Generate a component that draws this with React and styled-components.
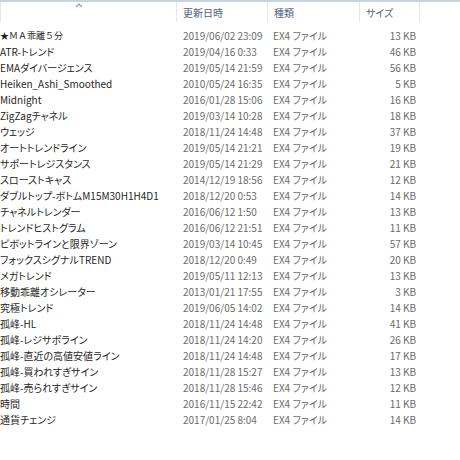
import React from "react";
import styled, { createGlobalStyle } from "styled-components";

const Global = createGlobalStyle`
  html, body { margin: 0; padding: 0; background: #fff; }
  body { width: 460px; height: 460px; overflow: hidden; }
`;

const files = [
  ["★ＭＡ乖離５分", "2019/06/02 23:09", "13 KB", true],
  ["ATR-トレンド", "2019/04/16 0:33", "46 KB"],
  ["EMAダイバージェンス", "2019/05/14 21:59", "56 KB"],
  ["Heiken_Ashi_Smoothed", "2010/05/24 16:35", "5 KB"],
  ["Midnight", "2016/01/28 15:06", "16 KB"],
  ["ZigZagチャネル", "2019/03/14 10:28", "18 KB"],
  ["ウェッジ", "2018/11/24 14:48", "37 KB"],
  ["オートトレンドライン", "2019/05/14 21:21", "19 KB"],
  ["サポートレジスタンス", "2019/05/14 21:29", "21 KB"],
  ["スローストキャス", "2014/12/19 18:56", "12 KB"],
  ["ダブルトップ-ボトムM15M30H1H4D1", "2018/12/20 0:53", "14 KB"],
  ["チャネルトレンダー", "2016/06/12 1:50", "13 KB"],
  ["トレンドヒストグラム", "2016/06/12 21:51", "11 KB"],
  ["ピボットラインと限界ゾーン", "2019/03/14 10:45", "57 KB"],
  ["フォックスシグナルTREND", "2018/12/20 0:49", "20 KB"],
  ["メガトレンド", "2019/05/11 12:13", "13 KB"],
  ["移動乖離オシレーター", "2013/01/21 17:55", "3 KB"],
  ["究極トレンド", "2019/06/05 14:02", "14 KB"],
  ["孤峰-HL", "2018/11/24 14:48", "41 KB"],
  ["孤峰-レジサポライン", "2018/11/24 14:20", "26 KB"],
  ["孤峰-直近の高値安値ライン", "2018/11/24 14:48", "17 KB"],
  ["孤峰-買われすぎサイン", "2018/11/28 15:27", "13 KB"],
  ["孤峰-売られすぎサイン", "2018/11/28 15:46", "12 KB"],
  ["時間", "2016/11/15 22:42", "11 KB"],
  ["通貨チェンジ", "2017/01/25 8:04", "14 KB"],
];

const cols = "177px 91px 92px 60px 1fr";

const Pane = styled.div`
  width: 460px;
  height: 460px;
  background: #fff;
  font-family: "Noto Sans CJK JP", "Noto Sans", sans-serif;
  font-feature-settings: "palt";
  font-size: 10px;
  display: flex;
  flex-direction: column;
`;

const Header = styled.div`
  display: grid;
  grid-template-columns: ${cols};
  height: 20px;
  border-top: 2px solid #c8d2e0;
`;

const HeaderCell = styled.div`
  position: relative;
  display: flex;
  align-items: center;
  padding-left: ${(p) => p.$pl || 6}px;
  color: #4f6483;
  border-right: ${(p) => (p.$last ? "none" : "1px solid #e4e8ee")};
  border-left: ${(p) => (p.$first ? "1px solid #e4e8ee" : "none")};
`;

const SortCaret = styled.svg`
  position: absolute;
  left: 74px;
  top: 1px;
`;

const List = styled.div`
  padding-top: 5px;
  display: flex;
  flex-direction: column;
`;

const Row = styled.div`
  display: grid;
  grid-template-columns: ${cols};
  height: 16px;
  align-items: center;
  white-space: nowrap;
`;

const Name = styled.div`
  color: #1f1f1f;
  padding-left: 0;
  overflow: hidden;
  font-feature-settings: ${(p) => (p.$full ? "normal" : "\"palt\"")};
  font-size: ${(p) => (p.$full ? "9px" : "10px")};
`;

const Cell = styled.div`
  color: #6b6b6b;
  padding-left: ${(p) => p.$pl}px;
  padding-right: ${(p) => p.$pr || 0}px;
  text-align: ${(p) => p.$align || "left"};
`;

export default function App() {
  return (
    <>
      <Global />
      <Pane>
        <Header>
          <HeaderCell $first>
            <SortCaret width="8" height="5" viewBox="0 0 8 5">
              <path d="M1 4 L4 1 L7 4" fill="none" stroke="#8a9ab0" strokeWidth="1.2" />
            </SortCaret>
          </HeaderCell>
          <HeaderCell $pl={6}>更新日時</HeaderCell>
          <HeaderCell $pl={6}>種類</HeaderCell>
          <HeaderCell $pl={6}>サイズ</HeaderCell>
          <HeaderCell $last />
        </Header>
        <List>
          {files.map(([n, d, s, full]) => (
            <Row key={n}>
              <Name $full={full}>{n}</Name>
              <Cell $pl={6}>{d}</Cell>
              <Cell $pl={5}>EX4 ファイル</Cell>
              <Cell $align="right" $pr={4}>{s}</Cell>
              <Cell />
            </Row>
          ))}
        </List>
      </Pane>
    </>
  );
}
